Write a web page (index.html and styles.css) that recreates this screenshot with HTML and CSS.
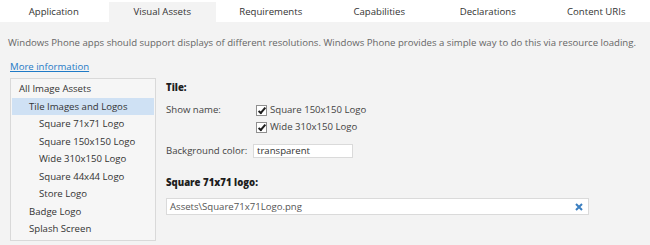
FILE: index.html
```html
<!DOCTYPE html>
<html lang="en">

<head>
    <meta charset="UTF-8">
    <title>Package Manifest - Visual Assets</title>
    <link rel="stylesheet" href="styles.css">
</head>

<body>

    <div class="tabs">
        <div class="tab">Application</div>
        <div class="tab active">Visual Assets</div>
        <div class="tab">Requirements</div>
        <div class="tab">Capabilities</div>
        <div class="tab">Declarations</div>
        <div class="tab">Content URIs</div>
    </div>

    <div class="content">
        <p class="intro">Windows Phone apps should support displays of different resolutions. Windows Phone provides a simple way to do this via resource loading.</p>
        <a href="#" class="more-link">More information</a>

        <div class="main">
            <!-- Asset tree -->
            <ul class="asset-list">
                <li class="level-0">All Image Assets</li>
                <li class="level-1 selected">Tile Images and Logos</li>
                <li class="level-2">Square 71x71 Logo</li>
                <li class="level-2">Square 150x150 Logo</li>
                <li class="level-2">Wide 310x150 Logo</li>
                <li class="level-2">Square 44x44 Logo</li>
                <li class="level-2">Store Logo</li>
                <li class="level-1">Badge Logo</li>
                <li class="level-1">Splash Screen</li>
            </ul>

            <!-- Tile settings -->
            <div class="settings">
                <h3>Tile:</h3>
                <div class="field-row">
                    <span class="field-label">Show name:</span>
                    <div class="checks">
                        <label class="check"><span class="box"></span>Square 150x150 Logo</label>
                        <label class="check"><span class="box"></span>Wide 310x150 Logo</label>
                    </div>
                </div>
                <div class="field-row color-row">
                    <span class="field-label">Background color:</span>
                    <div class="text-box small">transparent</div>
                </div>

                <h3 class="logo-title">Square 71x71 logo:</h3>
                <div class="text-box wide">
                    <span>Assets\Square71x71Logo.png</span>
                    <svg class="clear" width="8" height="8" viewBox="0 0 8 8">
                        <path d="M1 1 L7 7 M7 1 L1 7" stroke="#3b7fc0" stroke-width="2" />
                    </svg>
                </div>
            </div>
        </div>
    </div>

</body>

</html>
```

FILE: styles.css
```css
body {
    margin: 0;
    padding: 0;
    font-family: "Open Sans", "Noto Sans", sans-serif;
    font-size: 9.6px;
    color: #444;
    background-color: #f3f3f3;
    overflow: hidden;
}

.tabs {
    display: flex;
    gap: 1px;
    height: 22px;
    padding-top: 2px;
    box-sizing: border-box;
    background-color: #fff;
}

.tab {
    width: 108px;
    text-align: center;
    line-height: 20px;
    color: #333;
}

.tab.active {
    background-color: #f3f3f3;
}

.content {
    padding: 14px 8px 0 8px;
}

.intro {
    margin: 0;
    line-height: 14px;
    white-space: nowrap;
    color: #666;
}

.more-link {
    display: inline-block;
    margin-top: 10px;
    margin-left: 2px;
    color: #1f7ac6;
    line-height: 14px;
}

.main {
    display: flex;
    margin-top: 4px;
}

.asset-list {
    list-style: none;
    box-sizing: border-box;
    margin: 0 0 0 2px;
    padding: 1px;
    width: 146px;
    height: 163px;
    border: 1px solid #d9d9d9;
    background-color: #f6f6f6;
}

.asset-list li {
    height: 17.5px;
    line-height: 17.5px;
    color: #333;
}

.asset-list .level-0 {
    padding-left: 7px;
}

.asset-list .level-1 {
    padding-left: 17px;
}

.asset-list .level-2 {
    padding-left: 27px;
}

.asset-list .selected {
    background-color: #cfe1f4;
}

.settings {
    flex: 1;
    padding-left: 10px;
}

h3 {
    margin: 3px 0 8px 0;
    font-size: 9.6px;
    font-weight: 800;
    color: #1e1e1e;
    line-height: 14px;
}

.field-row {
    display: flex;
}

.field-label {
    width: 87px;
    line-height: 14px;
}

.checks {
    display: flex;
    flex-direction: column;
    gap: 3px;
    margin-left: 3px;
}

.check {
    display: flex;
    align-items: center;
    gap: 3px;
    line-height: 14px;
}

.box {
    position: relative;
    box-sizing: border-box;
    width: 11px;
    height: 11px;
    border: 1px solid #8f8f8f;
    background-color: #fff;
}

.box::after {
    content: "";
    position: absolute;
    left: 3px;
    top: 0;
    width: 2px;
    height: 6px;
    border: solid #1e1e1e;
    border-width: 0 2px 2px 0;
    transform: rotate(40deg);
}

.color-row {
    margin-top: 10px;
}

.text-box {
    box-sizing: border-box;
    height: 14px;
    line-height: 12px;
    padding: 0 3px;
    border: 1px solid #dadada;
    background-color: #fff;
    color: #333;
}

.text-box.small {
    width: 100px;
}

.logo-title {
    margin-top: 18px;
    margin-bottom: 8px;
}

.text-box.wide {
    display: flex;
    align-items: center;
    justify-content: space-between;
    width: 423px;
    height: 17px;
    line-height: 15px;
    color: #555;
}

.clear {
    margin-right: 2px;
}
```
